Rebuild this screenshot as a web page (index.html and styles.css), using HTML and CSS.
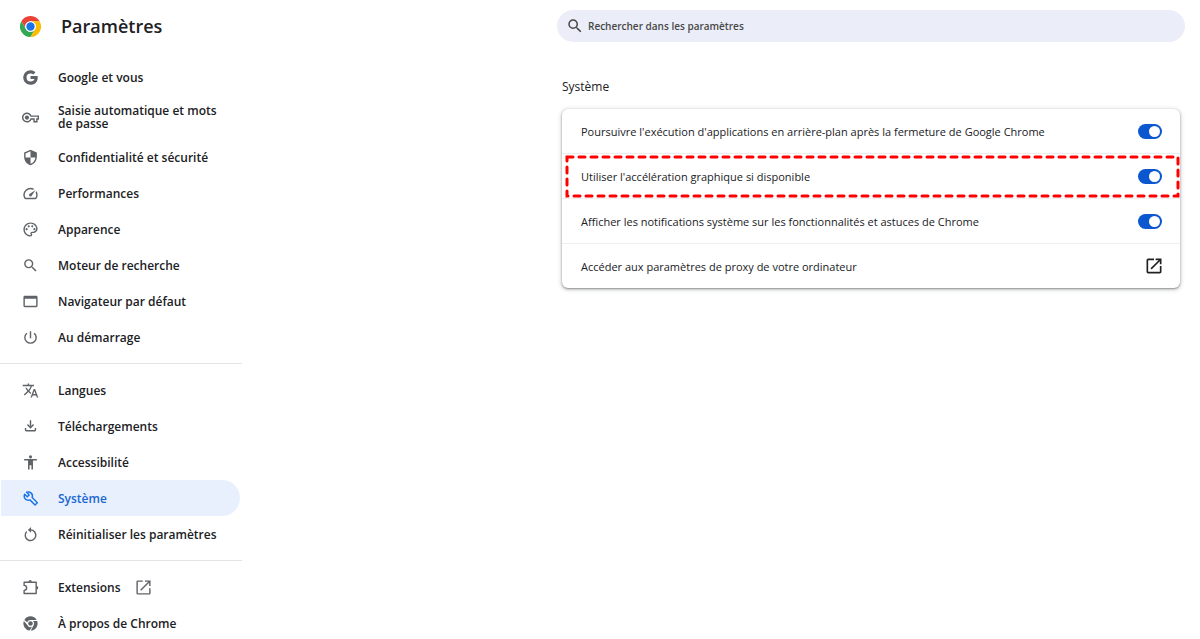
FILE: index.html
```
<!DOCTYPE html>
<html lang="fr">
<head>
  <meta charset="UTF-8" />
  <meta name="viewport" content="width=device-width, initial-scale=1.0"/>
  <title>Paramètres - Système</title>
  <link rel="stylesheet" href="styles.css">
</head>
<body>

  <!-- Menu de gauche -->
  <aside class="sidebar">
    <div class="brand">
      <svg class="logo" viewBox="0 0 48 48">
        <path fill="#ea4335" d="M3.2 12A24 24 0 0 1 44.8 12L24 12A12 12 0 0 0 13.6 30z"/>
        <path fill="#34a853" d="M3.2 12A24 24 0 0 0 24 48L34.4 30A12 12 0 0 1 13.6 30z"/>
        <path fill="#fbbc04" d="M44.8 12A24 24 0 0 1 24 48L34.4 30A12 12 0 0 0 24 12z"/>
        <circle cx="24" cy="24" r="12" fill="#fff"/>
        <circle cx="24" cy="24" r="9.5" fill="#1a73e8"/>
      </svg>
      <h1>Paramètres</h1>
    </div>

    <nav>
      <a class="item" href="#">
        <svg class="icon" viewBox="0 0 24 24"><path d="M12 10v4.200h5.600c-.6 2.200-2.600 3.600-5.400 3.600a5.800 5.800 0 0 1 0-11.600c1.500 0 2.800.5 3.800 1.500l3-3A10.200 10.200 0 1 0 12.200 22.300c6 0 10-4.200 10-10 0-.8-.1-1.600-.2-2.300z"/></svg>
        <span>Google et vous</span>
      </a>
      <a class="item two-lines" href="#">
        <svg class="icon" viewBox="0 0 24 24"><path d="M22 19h-6v-4h-2.680c-1.140 2.420-3.600 4-6.320 4-3.860 0-7-3.140-7-7s3.140-7 7-7c2.720 0 5.170 1.580 6.320 4H24v6h-2v4zm-4-2h2v-4h2v-2H11.940l-.23-.67C11.010 8.340 9.110 7 7 7c-2.760 0-5 2.240-5 5s2.240 5 5 5c2.110 0 4.010-1.340 4.710-3.330l.23-.67H18v4zM7 15c-1.650 0-3-1.350-3-3s1.350-3 3-3 3 1.350 3 3-1.350 3-3 3z"/></svg>
        <span>Saisie automatique et mots de passe</span>
      </a>
      <a class="item" href="#">
        <svg class="icon" viewBox="0 0 24 24"><path d="M12 1L3 5v6c0 5.550 3.840 10.740 9 12 5.160-1.260 9-6.450 9-12V5l-9-4zm0 11h7c-.53 4.120-3.280 7.790-7 8.940V12H5V6.300l7-3.110V12z"/></svg>
        <span>Confidentialité et sécurité</span>
      </a>
      <a class="item" href="#">
        <svg class="icon" viewBox="0 0 24 24"><path d="M20.380 8.570l-1.230 1.850a8 8 0 0 1-.22 7.580H5.070A8 8 0 0 1 15.580 6.850l1.850-1.230A10 10 0 0 0 3.350 19a2 2 0 0 0 1.720 1h13.850a2 2 0 0 0 1.740-1 10 10 0 0 0-.27-10.440zm-9.790 6.840a2 2 0 0 0 2.830 0l5.660-8.490-8.490 5.660a2 2 0 0 0 0 2.830z"/></svg>
        <span>Performances</span>
      </a>
      <a class="item" href="#">
        <svg class="icon" viewBox="0 0 24 24"><path d="M12 22C6.490 22 2 17.510 2 12S6.490 2 12 2s10 4.040 10 9c0 3.310-2.690 6-6 6h-1.770c-.28 0-.5.22-.5.5 0 .12.050.23.130.33.41.47.64 1.060.64 1.670A2.500 2.500 0 0 1 12 22zm0-18c-4.410 0-8 3.590-8 8s3.590 8 8 8c.28 0 .5-.22.5-.5a.54.54 0 0 0-.14-.35c-.41-.46-.63-1.050-.63-1.650a2.500 2.500 0 0 1 2.500-2.500H16c2.210 0 4-1.790 4-4 0-3.860-3.590-7-8-7z"/><circle cx="6.500" cy="11.500" r="1.500"/><circle cx="9.500" cy="7.500" r="1.500"/><circle cx="14.500" cy="7.500" r="1.500"/><circle cx="17.500" cy="11.500" r="1.500"/></svg>
        <span>Apparence</span>
      </a>
      <a class="item" href="#">
        <svg class="icon" viewBox="0 0 24 24"><path d="M15.500 14h-.79l-.28-.27A6.470 6.470 0 0 0 16 9.500 6.500 6.500 0 1 0 9.500 16c1.610 0 3.090-.59 4.230-1.570l.27.28v.79l5 4.990L20.490 19l-4.990-5zm-6 0C7.010 14 5 11.990 5 9.500S7.010 5 9.500 5 14 7.010 14 9.500 11.990 14 9.500 14z"/></svg>
        <span>Moteur de recherche</span>
      </a>
      <a class="item" href="#">
        <svg class="icon" viewBox="0 0 24 24"><path d="M20 4H4c-1.100 0-2 .9-2 2v12c0 1.100.9 2 2 2h16c1.100 0 2-.9 2-2V6c0-1.100-.9-2-2-2zm0 14H4V8h16v10z"/></svg>
        <span>Navigateur par défaut</span>
      </a>
      <a class="item" href="#">
        <svg class="icon" viewBox="0 0 24 24"><path d="M13 3h-2v10h2V3zm4.830 2.170l-1.420 1.420A6.920 6.920 0 0 1 19 12c0 3.870-3.130 7-7 7s-7-3.130-7-7c0-2.190 1.010-4.140 2.580-5.420L6.170 5.170A8.930 8.930 0 0 0 3 12a9 9 0 0 0 18 0c0-2.740-1.230-5.180-3.170-6.830z"/></svg>
        <span>Au démarrage</span>
      </a>

      <hr>

      <a class="item" href="#">
        <svg class="icon" viewBox="0 0 24 24"><path d="M12.870 15.070l-2.540-2.510.03-.03A17.520 17.520 0 0 0 14.070 6H17V4h-7V2H8v2H1v1.990h11.170C11.500 7.920 10.440 9.750 9 11.350 8.070 10.320 7.300 9.190 6.690 8h-2c.73 1.630 1.730 3.170 2.980 4.560l-5.090 5.020L4 19l5-5 3.110 3.110.76-2.040zM18.500 10h-2L12 22h2l1.120-3h4.750L21 22h2l-4.500-12zm-2.620 7l1.620-4.330L19.120 17h-3.240z"/></svg>
        <span>Langues</span>
      </a>
      <a class="item" href="#">
        <svg class="icon" viewBox="0 0 24 24"><path d="M11 3h2v8.200l2.600-2.600L17 10l-5 5-5-5 1.400-1.400 2.600 2.600zM4 14h2v3h12v-3h2v3a2 2 0 0 1-2 2H6a2 2 0 0 1-2-2z"/></svg>
        <span>Téléchargements</span>
      </a>
      <a class="item" href="#">
        <svg class="icon" viewBox="0 0 24 24"><circle cx="12" cy="4" r="2.200"/><path d="M21 9.200h-5.500V22h-2.200v-6h-2.600v6H8.500V9.200H3V7h18z"/></svg>
        <span>Accessibilité</span>
      </a>
      <a class="item active" href="#" aria-current="page">
        <svg class="icon" viewBox="-1 -1 26 26"><path fill="none" stroke="currentColor" stroke-width="2.200" stroke-linejoin="round" d="M3 5.500L7 9.500 10 6.500 6 2.500C11.500.6 16.400 5 14.600 10.600L22.500 18.500 19 22 11.100 14.100C5.500 16.400.8 11.300 3 5.500z"/></svg>
        <span>Système</span>
      </a>
      <a class="item" href="#">
        <svg class="icon" viewBox="0 0 24 24"><path fill="none" stroke="currentColor" stroke-width="2" d="M12 5.500a7.500 7.500 0 1 1-5.300 2.200"/><path d="M12.800 1.500v8L8.300 5.500z"/></svg>
        <span>Réinitialiser les paramètres</span>
      </a>

      <hr>

      <a class="item" href="#">
        <svg class="icon" viewBox="0 0 24 24"><path fill="none" stroke="currentColor" stroke-width="2" stroke-linejoin="round" d="M3 4.500h17v16H3v-4.500a3.500 3.500 0 0 0 0-7z"/><path d="M9 4a2.500 2.500 0 0 1 5 0zM20.500 10a2.500 2.500 0 0 1 0 5z"/></svg>
        <span>Extensions</span>
        <svg class="icon external" viewBox="0 0 24 24"><path d="M20 20H4V4h7V2H4a2 2 0 0 0-2 2v16a2 2 0 0 0 2 2h16c1.100 0 2-.9 2-2v-7h-2v7zM14 2v2h4.590L7.300 15.300l1.400 1.400L20 5.410V10h2V2h-8z"/></svg>
      </a>
      <a class="item" href="#">
        <svg class="icon" viewBox="0 0 24 24"><path d="M3.300 7A10 10 0 0 1 20.700 7H12a5 5 0 0 0-4.600 3.200zM2.600 8.600A10 10 0 0 0 10.800 22l3.400-5.500A5 5 0 0 1 7.500 14zM21.400 8.500A10 10 0 0 1 12.500 22l4-7.800A5 5 0 0 0 15.500 8.500z"/><circle cx="12" cy="12" r="3.200"/></svg>
        <span>À propos de Chrome</span>
      </a>
    </nav>
  </aside>

  <!-- Contenu -->
  <main class="content">
    <label class="search">
      <svg class="icon" viewBox="0 0 24 24"><path d="M15.500 14h-.79l-.28-.27A6.470 6.470 0 0 0 16 9.500 6.500 6.500 0 1 0 9.500 16c1.610 0 3.090-.59 4.230-1.570l.27.28v.79l5 4.990L20.490 19l-4.990-5zm-6 0C7.010 14 5 11.990 5 9.500S7.010 5 9.500 5 14 7.010 14 9.500 11.990 14 9.500 14z"/></svg>
      <input type="search" placeholder="Rechercher dans les paramètres" aria-label="Rechercher dans les paramètres">
    </label>

    <section class="system">
      <h2>Système</h2>
      <div class="card">
        <label class="row">
          <span>Poursuivre l'exécution d'applications en arrière-plan après la fermeture de Google Chrome</span>
          <input class="toggle" type="checkbox" checked>
        </label>
        <label class="row">
          <span>Utiliser l'accélération graphique si disponible</span>
          <input class="toggle" type="checkbox" checked>
          <svg class="highlight"><rect x="2" y="2"/></svg>
        </label>
        <label class="row">
          <span>Afficher les notifications système sur les fonctionnalités et astuces de Chrome</span>
          <input class="toggle" type="checkbox" checked>
        </label>
        <a class="row" href="#">
          <span>Accéder aux paramètres de proxy de votre ordinateur</span>
          <svg class="open" viewBox="0 0 24 24"><path d="M19 19H5V5h7V3H5a2 2 0 0 0-2 2v14a2 2 0 0 0 2 2h14c1.100 0 2-.9 2-2v-7h-2v7zM14 3v2h3.590l-9.830 9.830 1.410 1.410L19 6.410V10h2V3h-7z"/></svg>
        </a>
      </div>
    </section>
  </main>

</body>
</html>
```
FILE: styles.css
```
* {
  box-sizing: border-box;
}

body {
  display: flex;
  margin: 0;
  background-color: #fff;
  color: #202124;
  font-family: "Open Sans", "Noto Sans", sans-serif;
  font-size: 12px;
}

a {
  color: inherit;
  text-decoration: none;
}

svg {
  flex-shrink: 0;
  fill: currentColor;
}

/* Menu */
.sidebar {
  flex: 0 0 242px;
}

.brand {
  display: flex;
  align-items: center;
  gap: 20px;
  height: 52px;
  margin-bottom: 7px;
  padding-left: 20px;
}

.logo {
  width: 21px;
  height: 21px;
}

h1 {
  margin: 0;
  font-size: 18px;
  font-weight: 600;
}

.item {
  display: flex;
  align-items: center;
  gap: 19px;
  height: 36px;
  margin: 0 2px 0 1px;
  padding: 0 16px 0 21px;
  border-radius: 0 18px 18px 0;
  font-weight: 600;
  line-height: 13px;
}

.item.two-lines {
  height: 44px;
}

.item.active {
  background-color: #e8f0fe;
  color: #1967d2;
}

.icon {
  width: 17px;
  height: 17px;
  color: #5f6368;
}

.active .icon {
  color: #1a73e8;
}

.icon.external {
  margin-left: -5px;
}

hr {
  height: 1px;
  margin: 8px 0;
  border: 0;
  background-color: #e3e4e6;
}

/* Contenu */
.content {
  flex: 1;
  max-width: 628px;
  margin: 10px 15px 0 auto;
}

.search {
  display: flex;
  align-items: center;
  gap: 4px;
  height: 32px;
  padding: 0 9px;
  border-radius: 16px;
  background-color: #ebeef8;
}

.search .icon {
  width: 18px;
  height: 18px;
  color: #474747;
}

.search input {
  flex: 1;
  padding: 0;
  border: 0;
  outline: 0;
  background: none;
  font: 600 10px "Open Sans", "Noto Sans", sans-serif;
}

.search input::placeholder {
  color: #474747;
}

.system {
  margin: 36px 5px 0;
}

h2 {
  margin: 0 0 14px;
  font-size: 12px;
  font-weight: 400;
  line-height: 17px;
}

.card {
  border-radius: 6px;
  box-shadow: 0 1px 2px rgba(60, 64, 67, 0.5), 0 1px 4px 1px rgba(60, 64, 67, 0.2);
  font-size: 11px;
}

.row {
  position: relative;
  display: flex;
  align-items: center;
  justify-content: space-between;
  height: 44px;
  padding: 0 18px 0 19px;
}

.row + .row {
  height: 45px;
  border-top: 1px solid #eeeff0;
}

.toggle {
  appearance: none;
  width: 24px;
  height: 15px;
  margin: 0;
  padding: 2px;
  border-radius: 8px;
  background-color: #0b57d0;
}

.toggle::before {
  content: "";
  display: block;
  width: 11px;
  height: 11px;
  margin-left: auto;
  border-radius: 50%;
  background-color: #fff;
}

.open {
  width: 20px;
  height: 20px;
  margin-right: -2px;
}

/* Cadre rouge autour de l'option */
.highlight {
  position: absolute;
  top: 1px;
  left: 3px;
  width: calc(100% - 3px);
  height: 43px;
  pointer-events: none;
}

.highlight rect {
  width: calc(100% - 4px);
  height: calc(100% - 4px);
  fill: none;
  stroke: #f00;
  stroke-width: 3px;
  stroke-dasharray: 6 6;
  stroke-linecap: round;
}
```
